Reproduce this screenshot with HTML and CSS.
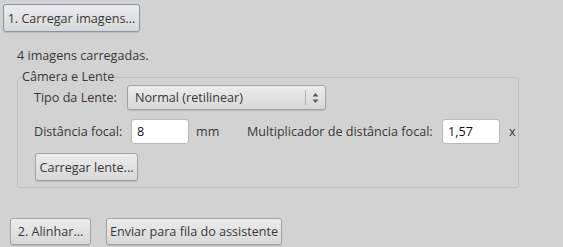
FILE: index.html
```html
<!DOCTYPE html>
<html>
<head>
<meta charset="utf-8">
<link rel="stylesheet" href="styles.css">
</head>
<body>
<div class="page">
  <div class="top-row">
    <button class="btn btn-default btn-load">1. Carregar imagens...</button>
  </div>
  <div class="status">4 imagens carregadas.</div>
  <fieldset class="group">
    <legend class="group-title">Câmera e Lente</legend>
    <div class="row row-lens">
      <span class="label lbl-type">Tipo da Lente:</span>
      <div class="combo">
        <span class="combo-text">Normal (retilinear)</span>
        <span class="combo-sep"></span>
        <svg class="combo-arrows" width="7" height="12" viewBox="0 0 7 12">
          <path d="M3.5 1 L6.5 4.5 L0.5 4.5 Z" fill="#5a5a5a"/>
          <path d="M3.5 11 L6.5 7.5 L0.5 7.5 Z" fill="#5a5a5a"/>
        </svg>
      </div>
    </div>
    <div class="row row-focal">
      <span class="label lbl-focal">Distância focal:</span>
      <div class="entry entry-focal">8</div>
      <span class="label unit-mm">mm</span>
      <span class="label lbl-mult">Multiplicador de distância focal:</span>
      <div class="entry entry-mult">1,57</div>
      <span class="label unit-x">x</span>
    </div>
    <div class="row row-btn">
      <button class="btn btn-lens">Carregar lente...</button>
    </div>
  </fieldset>
  <div class="bottom-row">
    <button class="btn btn-align">2. Alinhar...</button>
    <button class="btn btn-queue">Enviar para fila do assistente</button>
  </div>
</div>
</body>
</html>
```

FILE: styles.css
```css
* { box-sizing: border-box; }
html, body { margin: 0; padding: 0; }
body {
  width: 563px;
  height: 247px;
  background: #d2d2d2;
  font-family: "Open Sans", "Noto Sans", sans-serif;
  font-size: 12.6px;
  color: #383838;
  overflow: hidden;
}
.page { display: flex; flex-direction: column; }

.btn {
  font: inherit;
  color: #383838;
  background: linear-gradient(#ececec, #d8d8d8);
  border: 1px solid #a3a3a3;
  border-radius: 3px;
  box-shadow: 0 1px 1px rgba(0,0,0,0.12);
  padding: 0;
  display: flex;
  align-items: center;
  justify-content: center;
}

.top-row { padding: 4px 0 0 3px; display: flex; }
.btn-load { width: 137px; height: 28px; border-color: #8494aa; }

.status { margin: 16px 0 0 17px; line-height: 16px; }

.group {
  margin: 6px 0 0 17px;
  width: 502px;
  height: 118px;
  border: 1px solid #c0c0c0;
  border-radius: 3px;
  padding: 0 0 0 16px;
  display: flex;
  flex-direction: column;
}
.group-title {
  padding: 0;
  margin-left: -12px;
  line-height: 14px;
}

.row { display: flex; align-items: center; }
.row-lens { margin-top: 1px; height: 25px; }
.lbl-type { width: 93px; }
.combo {
  width: 199px;
  height: 25px;
  background: linear-gradient(#ececec, #d8d8d8);
  border: 1px solid #a3a3a3;
  border-radius: 3px;
  box-shadow: 0 1px 1px rgba(0,0,0,0.12);
  display: flex;
  align-items: center;
  padding-left: 7px;
}
.combo-text { flex: 1; }
.combo-sep { width: 1px; height: 15px; background: #b0b0b0; margin-right: 6px; }
.combo-arrows { margin-right: 6px; }

.row-focal { margin-top: 9px; height: 25px; }
.lbl-focal { width: 97px; }
.entry {
  height: 25px;
  width: 58px;
  background: #fff;
  border: 1px solid #b8b8b8;
  border-radius: 3px;
  color: #111;
  padding-left: 5px;
  display: flex;
  align-items: center;
}
.unit-mm { margin-left: 7px; width: 51px; }
.lbl-mult { width: 195px; }
.unit-x { margin-left: 9px; }

.row-btn { margin-top: 9px; }
.btn-lens { width: 103px; height: 28px; margin-left: 1px; }

.bottom-row { display: flex; gap: 15px; padding-left: 10px; margin-top: 30px; }
.btn-align { width: 81px; height: 27px; }
.btn-queue { width: 176px; height: 27px; }
```
